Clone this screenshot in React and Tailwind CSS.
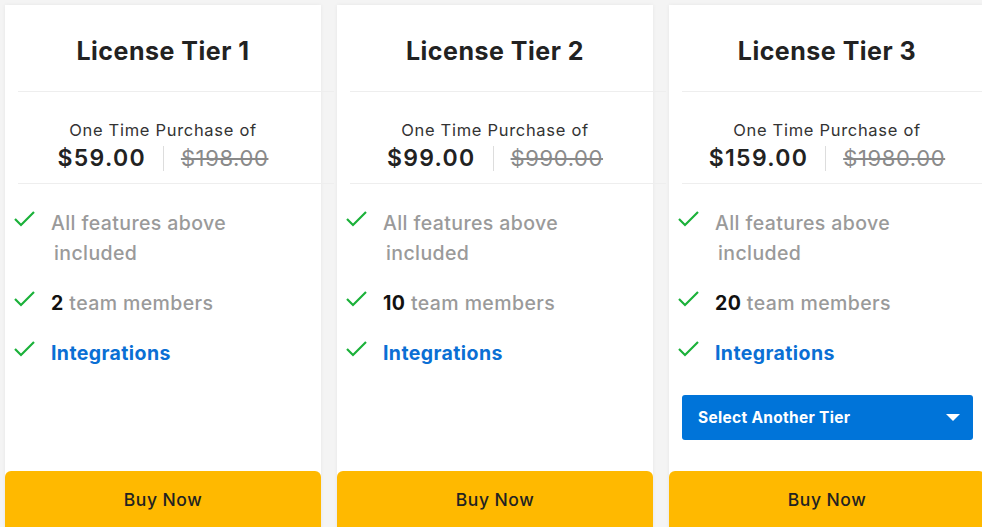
import React from "react";

const font = { fontFamily: "Inter, 'Open Sans', sans-serif" };

function Check() {
  return (
    <svg width="21" height="16" viewBox="0 0 21 16" className="shrink-0">
      <polyline points="1,8 7,14 20,1" fill="none" stroke="#1bb13a" strokeWidth="2.2" />
    </svg>
  );
}

function Feature({ children, top }) {
  return (
    <div className="flex items-start">
      <div className={`w-[46px] pl-[9px] ${top}`}>
        <Check />
      </div>
      <div className="text-[19.5px] leading-[30px] font-medium tracking-[0.4px] text-[#9a9a9a]">{children}</div>
    </div>
  );
}

function Card({ n, price, old, members, select }) {
  return (
    <div className="w-[316px] h-[526px] shrink-0 bg-white shadow-[0_0_4px_rgba(0,0,0,0.06)] flex flex-col">
      <div className="h-[86px] flex items-center justify-center pt-[8px]">
        <h2 className="text-[25px] font-bold text-[#222] tracking-[0.5px]">License Tier {n}</h2>
      </div>
      <div className="ml-[13px] w-full h-px bg-[#eeeeee]" />
      <div className="h-[91px] flex flex-col items-center pt-[27px]">
        <div className="text-[16.5px] leading-[22px] text-[#333] tracking-[0.7px]">One Time Purchase of</div>
        <div className="flex items-center">
          <span className="text-[23px] font-semibold text-[#222] tracking-[1.3px]">{price}</span>
          <span className="w-px h-[25px] bg-[#dddddd] mx-[17px]" />
          <span className="text-[22px] font-normal text-[#8a8a8a] line-through decoration-[1.5px] tracking-[0.6px]">{old}</span>
        </div>
      </div>
      <div className="ml-[13px] w-full h-px bg-[#eeeeee]" />
      <div className="flex flex-col pt-[24px] gap-[20px]">
        <Feature top="pt-[3px]">
          <div>All features above</div>
          <div className="pl-[3px]">included</div>
        </Feature>
        <Feature top="pt-[3px]">
          <span className="font-bold text-[#111]">{members}</span> team members
        </Feature>
        <Feature top="pt-[3px]">
          <span className="font-bold text-[#0a6fd4]">Integrations</span>
        </Feature>
      </div>
      {select && (
        <div className="mt-[27px] ml-[13px] mr-[12px] h-[45px] rounded-[3px] bg-[#0074d9] flex items-center justify-between pl-[16px] pr-[13px]">
          <span className="text-[15.5px] font-bold text-white tracking-[0.3px]">Select Another Tier</span>
          <svg width="14" height="8" viewBox="0 0 14 8">
            <polygon points="0,0 14,0 7,7" fill="white" />
          </svg>
        </div>
      )}
      <button className="mt-auto h-[60px] w-full rounded-t-[6px] bg-[#ffb900] flex items-start justify-center pt-[16px]">
        <span className="text-[17.5px] font-medium text-[#222] tracking-[0.5px]">Buy Now</span>
      </button>
    </div>
  );
}

export default function App() {
  return (
    <div style={font} className="w-[982px] h-[527px] overflow-hidden bg-[#f4f4f4] pt-[5px] pl-[5px] flex gap-[16px]">
      <Card n={1} price="$59.00" old="$198.00" members="2" />
      <Card n={2} price="$99.00" old="$990.00" members="10" />
      <Card n={3} price="$159.00" old="$1980.00" members="20" select />
    </div>
  );
}
